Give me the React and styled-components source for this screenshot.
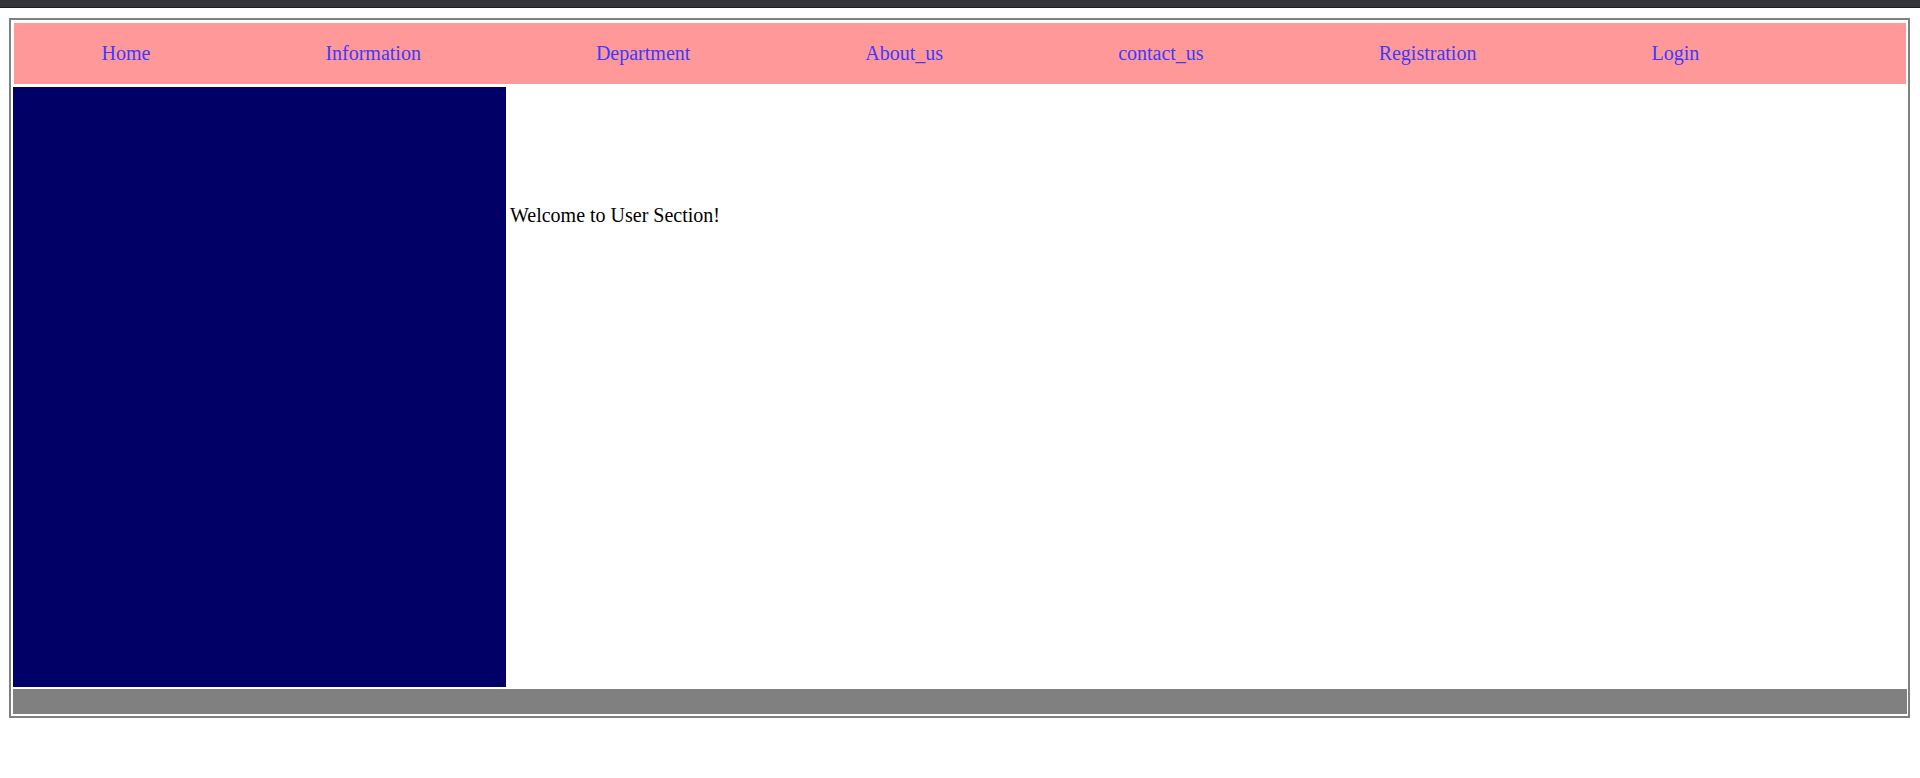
import React from 'react'
import styled, { createGlobalStyle } from 'styled-components'

const Global = createGlobalStyle`
body{
  margin:0;
  background:#ffffff;
  font-family:"Liberation Serif", "Times New Roman", serif;
}
`
const Chrome = styled.div`
height:7px;
background:#35363a;
border-bottom:1px solid #202124;
`
const Frame = styled.div`
margin:10px 0 0 9px;
width:1901px;
box-sizing:border-box;
border:2px solid #808080;
padding:2px 1px 2px 2px;
display:flex;
flex-direction:column;
`
const NavBar = styled.nav`
display:flex;
align-items:center;
height:61px;
margin:1px 1px 0 1px;
background:#ff9999;
`
const NavLink = styled.a`
padding:0 87.5px;
font-size:20px;
line-height:23px;
color:#3b3bff;
text-decoration:none;
white-space:nowrap;
cursor:pointer;
`
const Body = styled.div`
display:flex;
height:600px;
margin-top:3px;
`
const Side = styled.div`
width:493px;
background:#000066;
`
const Content = styled.div`
flex:1;
padding:117px 0 0 4px;
font-size:20px;
line-height:23px;
color:#000000;
`
const Footer = styled.div`
height:25px;
margin-top:2px;
background:#808080;
`

const links = ['Home', 'Information', 'Department', 'About_us', 'contact_us', 'Registration', 'Login']

const App = () => {
  return (
    <>
      <Global />
      <Chrome />
      <Frame>
        <NavBar>
          {links.map(l => (
            <NavLink key={l} href="#">{l}</NavLink>
          ))}
        </NavBar>
        <Body>
          <Side />
          <Content>Welcome to User Section!</Content>
        </Body>
        <Footer />
      </Frame>
    </>
  )
}

export default App
